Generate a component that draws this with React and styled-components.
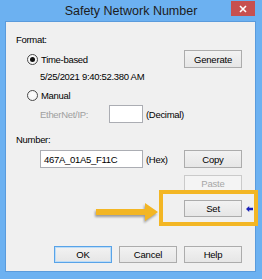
import React from "react";
import styled, { createGlobalStyle } from "styled-components";

const GlobalStyle = createGlobalStyle`
  html, body { margin: 0; padding: 0; background: #ffffff; }
  body { width: 262px; height: 280px; overflow: hidden; }
`;

const Window = styled.div`
  position: relative;
  width: 262px;
  height: 279px;
  background: #6cb1f1;
  display: flex;
  flex-direction: column;
  font-family: "Liberation Sans", Arial, sans-serif;
`;

const TitleBar = styled.div`
  position: relative;
  height: 22px;
  display: flex;
  align-items: center;
  justify-content: center;
  font-family: "Liberation Sans", Arial, sans-serif;
  font-size: 12.5px;
  color: #1c1c1c;
  padding-bottom: 1px;
  box-sizing: border-box;
`;

const CloseButton = styled.div`
  position: absolute;
  top: 1px;
  right: 7px;
  width: 24px;
  height: 15px;
  background: #c75050;
  display: flex;
  align-items: center;
  justify-content: center;
`;

const Client = styled.div`
  margin: 0 7px 0 6px;
  height: 249px;
  background: #f0f0f0;
  box-shadow: 0 0 0 1px #5a9bdc;
  padding: 11px 13px 0 10px;
  box-sizing: border-box;
  display: flex;
  flex-direction: column;
  font-size: 9.5px;
  letter-spacing: -0.3px;
  color: #000;
`;

const Label = styled.div`
  height: 13px;
  line-height: 13px;
  margin-top: ${(p) => p.$top || 0}px;
  padding-left: ${(p) => p.$indent || 0}px;
  color: ${(p) => (p.$disabled ? "#9f9f9f" : "#000")};
  white-space: nowrap;
`;

const Row = styled.div`
  display: flex;
  align-items: center;
  height: ${(p) => p.$h || 18}px;
  margin-top: ${(p) => p.$top || 0}px;
  padding-left: ${(p) => p.$indent || 0}px;
  justify-content: ${(p) => p.$justify || "flex-start"};
  gap: ${(p) => p.$gap || 0}px;
`;

const RadioWrap = styled.label`
  display: flex;
  align-items: center;
  gap: 3px;
  height: 13px;
  padding-left: 11px;
`;

const RadioCircle = styled.span`
  width: 11px;
  height: 11px;
  border-radius: 50%;
  border: 1px solid #4a4a4a;
  box-sizing: border-box;
  background: radial-gradient(circle at 50% 40%, #ffffff 0%, #f0f0f0 100%);
  display: flex;
  align-items: center;
  justify-content: center;
  &::after {
    content: "";
    width: 5px;
    height: 5px;
    border-radius: 50%;
    background: ${(p) => (p.$checked ? "#111" : "transparent")};
  }
`;

const Spacer = styled.div`
  flex: 1;
`;

const Button = styled.div`
  width: 58px;
  height: ${(p) => p.$h || 17}px;
  box-sizing: border-box;
  border: 1px solid ${(p) => (p.$default ? "#58a3e8" : p.$disabled ? "#cacaca" : "#acacac")};
  background: ${(p) =>
    p.$disabled ? "#f4f4f4" : "linear-gradient(#f2f2f2, #e6e6e6)"};
  color: ${(p) => (p.$disabled ? "#a6a6a6" : "#000")};
  display: flex;
  align-items: center;
  justify-content: center;
  font-size: 9.5px;
  letter-spacing: -0.2px;
  box-shadow: ${(p) => (p.$default ? "inset 0 0 0 1px #bcdcf7" : "none")};
`;

const FieldLabel = styled.div`
  width: ${(p) => p.$w}px;
  color: ${(p) => (p.$disabled ? "#9f9f9f" : "#000")};
  white-space: nowrap;
`;

const TextBox = styled.div`
  width: ${(p) => p.$w}px;
  height: ${(p) => p.$h || 18}px;
  box-sizing: border-box;
  border: 1px solid #abadb3;
  background: #ffffff;
  display: flex;
  align-items: center;
  padding-left: 3px;
  white-space: nowrap;
`;

const Suffix = styled.div`
  margin-left: 3px;
  white-space: nowrap;
`;

const SetRow = styled.div`
  display: flex;
  align-items: center;
  justify-content: flex-end;
  height: 17px;
  margin-top: 8px;
  margin-right: -13px;
`;

const Marker = styled.div`
  width: 13px;
  display: flex;
  align-items: center;
  justify-content: flex-start;
  padding-left: 4px;
  box-sizing: border-box;
`;

const Highlight = styled.div`
  position: absolute;
  left: 159px;
  top: 190px;
  width: 99px;
  height: 36px;
  box-sizing: border-box;
  border: 4px solid #f3b624;
  pointer-events: none;
`;

const PointerArrow = styled.svg`
  position: absolute;
  left: 92px;
  top: 200px;
  overflow: visible;
  filter: drop-shadow(-1px 2px 1.2px rgba(0, 0, 0, 0.35));
`;

export default function App() {
  return (
    <>
      <GlobalStyle />
      <Window>
        <TitleBar>
          Safety Network Number
          <CloseButton>
            <svg width="8" height="8" viewBox="0 0 8 8">
              <path d="M1 1 L7 7 M7 1 L1 7" stroke="#ffffff" strokeWidth="1.6" />
            </svg>
          </CloseButton>
        </TitleBar>
        <Client>
          <Label>Format:</Label>
          <Row $top={4} $h={18}>
            <RadioWrap>
              <RadioCircle $checked />
              Time-based
            </RadioWrap>
            <Spacer />
            <Button $h={18}>Generate</Button>
          </Row>
          <Label $top={2} $indent={24}>5/25/2021 9:40:52.380 AM</Label>
          <Row $top={6} $h={13}>
            <RadioWrap>
              <RadioCircle />
              Manual
            </RadioWrap>
          </Row>
          <Row $top={3} $h={18} $indent={24}>
            <FieldLabel $w={69} $disabled>EtherNet/IP:</FieldLabel>
            <TextBox $w={34} />
            <Suffix>(Decimal)</Suffix>
          </Row>
          <Label $top={10}>Number:</Label>
          <Row $top={4} $h={18} $indent={24}>
            <TextBox $w={103}>467A_01A5_F11C</TextBox>
            <Suffix>(Hex)</Suffix>
            <Spacer />
            <Button $h={18}>Copy</Button>
          </Row>
          <Row $top={7} $h={17} $justify="flex-end">
            <Button $disabled>Paste</Button>
          </Row>
          <SetRow>
            <Button>Set</Button>
            <Marker>
              <svg width="7" height="6" viewBox="0 0 7 6">
                <path d="M0 3 L3.2 0 L3.2 1.8 L7 1.8 L7 4.2 L3.2 4.2 L3.2 6 Z" fill="#1a22b8" />
              </svg>
            </Marker>
          </SetRow>
          <Row $top={29} $h={17} $justify="flex-end" $gap={7}>
            <Button $default>OK</Button>
            <Button>Cancel</Button>
            <Button>Help</Button>
          </Row>
        </Client>
        <Highlight />
        <PointerArrow width="68" height="24" viewBox="0 0 68 24">
          <path
            d="M4 9 L53 9 L53 3 L66 12 L53 21 L53 15 L4 15 Z"
            fill="#f3b624"
          />
        </PointerArrow>
      </Window>
    </>
  );
}
